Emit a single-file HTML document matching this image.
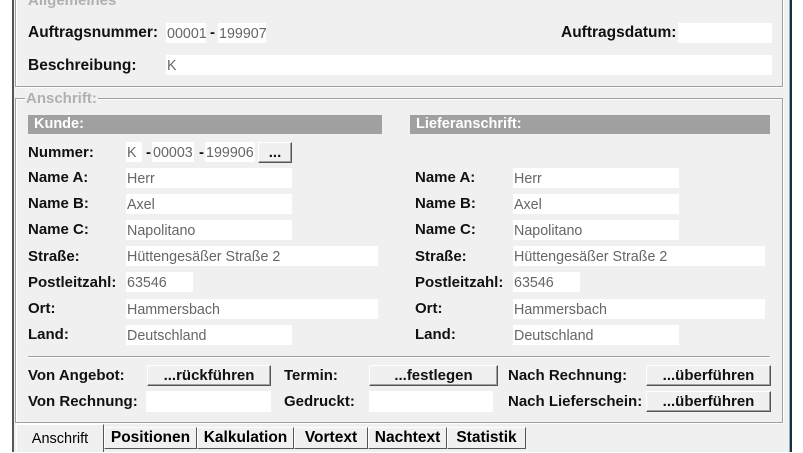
<!DOCTYPE html>
<html><head><meta charset="utf-8"><style>
*{margin:0;padding:0;box-sizing:border-box}
body{width:803px;height:452px;background:#fff;position:relative;overflow:hidden;font-family:"Liberation Sans",Arial,sans-serif;font-size:15px}
.a{position:absolute;white-space:nowrap}
.bg{left:12px;top:0;width:778px;height:452px;background:#f0f0f0;border-left:2px solid #555}
.rb{left:789px;top:0;width:3px;height:452px;background:#2a2a2a;border-left:1px solid #6fb6e0}
.fs{border:1px solid #a0a0a0;box-shadow:inset 1px 1px 0 #fff,1px 1px 0 #fff}
.lg{color:#b0b0b0;font-weight:bold;background:#f0f0f0;padding:0 1px;font-size:15px;line-height:15px}
.l{font-weight:bold;color:#111;line-height:20px;height:20px;font-size:15px;margin-top:1px}
.t{font-size:15.5px}
.i{background:#fff;color:#666;line-height:22px;height:20px;padding-left:1px;font-size:14.3px}
.bar{background:#a0a0a0;color:#fff;font-weight:bold;height:19px;line-height:19px;padding-left:6px;font-size:14.5px}
.btn{background:#f0f0f0;border:1px solid;border-color:#fff #555 #555 #fff;box-shadow:inset -1px -1px 0 #a0a0a0;text-align:center;font-weight:bold;color:#111;line-height:19px;height:21px;font-size:15px}
.c{font-size:15px}
.tab{top:427px;height:22px;border:1px solid;border-color:#fff #555 #555 #fff;text-align:center;font-weight:bold;line-height:20px;background:#f0f0f0;font-size:15.5px}
</style></head><body>
<div class="a bg"></div>
<div class="a rb"></div>
<div class="a fs" style="left:15px;top:-10px;width:768px;height:97px"></div>
<div class="a lg" style="left:27px;top:-7px">Allgemeines</div>
<div class="a l t" style="left:28px;top:22px">Auftragsnummer:</div>
<div class="a i" style="left:166px;top:23px;width:40px">00001</div>
<div class="a l" style="left:210px;top:22px">-</div>
<div class="a i" style="left:218px;top:23px;width:48px">199907</div>
<div class="a l t" style="left:561px;top:22px">Auftragsdatum:</div>
<div class="a i" style="left:678px;top:23px;width:94px"></div>
<div class="a l t" style="left:28px;top:55px">Beschreibung:</div>
<div class="a i" style="left:166px;top:55px;width:606px">K</div>

<div class="a fs" style="left:15px;top:98px;width:768px;height:325px"></div>
<div class="a lg" style="left:25px;top:91px">Anschrift:</div>
<div class="a bar" style="left:28px;top:115px;width:354px">Kunde:</div>
<div class="a bar" style="left:410px;top:115px;width:360px">Lieferanschrift:</div>

<div class="a l" style="left:28px;top:142px">Nummer:</div>
<div class="a i" style="left:126px;top:142px;width:16px">K</div>
<div class="a l" style="left:146px;top:142px">-</div>
<div class="a i" style="left:152px;top:142px;width:42px">00003</div>
<div class="a l" style="left:199px;top:142px">-</div>
<div class="a i" style="left:205px;top:142px;width:50px">199906</div>
<div class="a btn" style="left:258px;top:142px;width:34px">...</div>

<div class="a l" style="left:28px;top:167px">Name A:</div><div class="a i" style="left:126px;top:168px;width:166px">Herr</div>
<div class="a l" style="left:28px;top:193px">Name B:</div><div class="a i" style="left:126px;top:194px;width:166px">Axel</div>
<div class="a l" style="left:28px;top:219px">Name C:</div><div class="a i" style="left:126px;top:220px;width:166px">Napolitano</div>
<div class="a l" style="left:28px;top:246px">Straße:</div><div class="a i" style="left:126px;top:246px;width:252px">Hüttengesäßer Straße 2</div>
<div class="a l" style="left:28px;top:272px">Postleitzahl:</div><div class="a i" style="left:126px;top:272px;width:67px">63546</div>
<div class="a l" style="left:28px;top:298px">Ort:</div><div class="a i" style="left:126px;top:299px;width:252px">Hammersbach</div>
<div class="a l" style="left:28px;top:324px">Land:</div><div class="a i" style="left:126px;top:325px;width:166px">Deutschland</div>

<div class="a l" style="left:415px;top:167px">Name A:</div><div class="a i" style="left:513px;top:168px;width:166px">Herr</div>
<div class="a l" style="left:415px;top:193px">Name B:</div><div class="a i" style="left:513px;top:194px;width:166px">Axel</div>
<div class="a l" style="left:415px;top:219px">Name C:</div><div class="a i" style="left:513px;top:220px;width:166px">Napolitano</div>
<div class="a l" style="left:415px;top:246px">Straße:</div><div class="a i" style="left:513px;top:246px;width:252px">Hüttengesäßer Straße 2</div>
<div class="a l" style="left:415px;top:272px">Postleitzahl:</div><div class="a i" style="left:513px;top:272px;width:67px">63546</div>
<div class="a l" style="left:415px;top:298px">Ort:</div><div class="a i" style="left:513px;top:299px;width:252px">Hammersbach</div>
<div class="a l" style="left:415px;top:324px">Land:</div><div class="a i" style="left:513px;top:325px;width:166px">Deutschland</div>

<div class="a" style="left:28px;top:356px;width:742px;height:2px;border-top:1px solid #a0a0a0;border-bottom:1px solid #fff;border-radius:2px"></div>

<div class="a l c" style="left:28px;top:365px">Von Angebot:</div>
<div class="a btn c" style="left:147px;top:365px;width:124px">...rückführen</div>
<div class="a l c" style="left:284px;top:365px">Termin:</div>
<div class="a btn c" style="left:369px;top:365px;width:129px">...festlegen</div>
<div class="a l c" style="left:508px;top:365px">Nach Rechnung:</div>
<div class="a btn c" style="left:646px;top:365px;width:125px">...überführen</div>

<div class="a l c" style="left:28px;top:391px">Von Rechnung:</div>
<div class="a i" style="left:146px;top:391px;width:125px;height:21px"></div>
<div class="a l c" style="left:284px;top:391px">Gedruckt:</div>
<div class="a i" style="left:369px;top:391px;width:124px;height:21px"></div>
<div class="a l c" style="left:508px;top:391px">Nach Lieferschein:</div>
<div class="a btn c" style="left:646px;top:391px;width:125px">...überführen</div>

<div class="a tab" style="left:104px;width:93px">Positionen</div>
<div class="a tab" style="left:197px;width:97px">Kalkulation</div>
<div class="a tab" style="left:294px;width:74px">Vortext</div>
<div class="a tab" style="left:368px;width:79px">Nachtext</div>
<div class="a tab" style="left:447px;width:79px">Statistik</div>
<div class="a tab" style="left:16px;top:424px;width:88px;height:28px;font-weight:normal;line-height:28px;border-bottom:none;font-size:14.5px">Anschrift</div>
</body></html>
